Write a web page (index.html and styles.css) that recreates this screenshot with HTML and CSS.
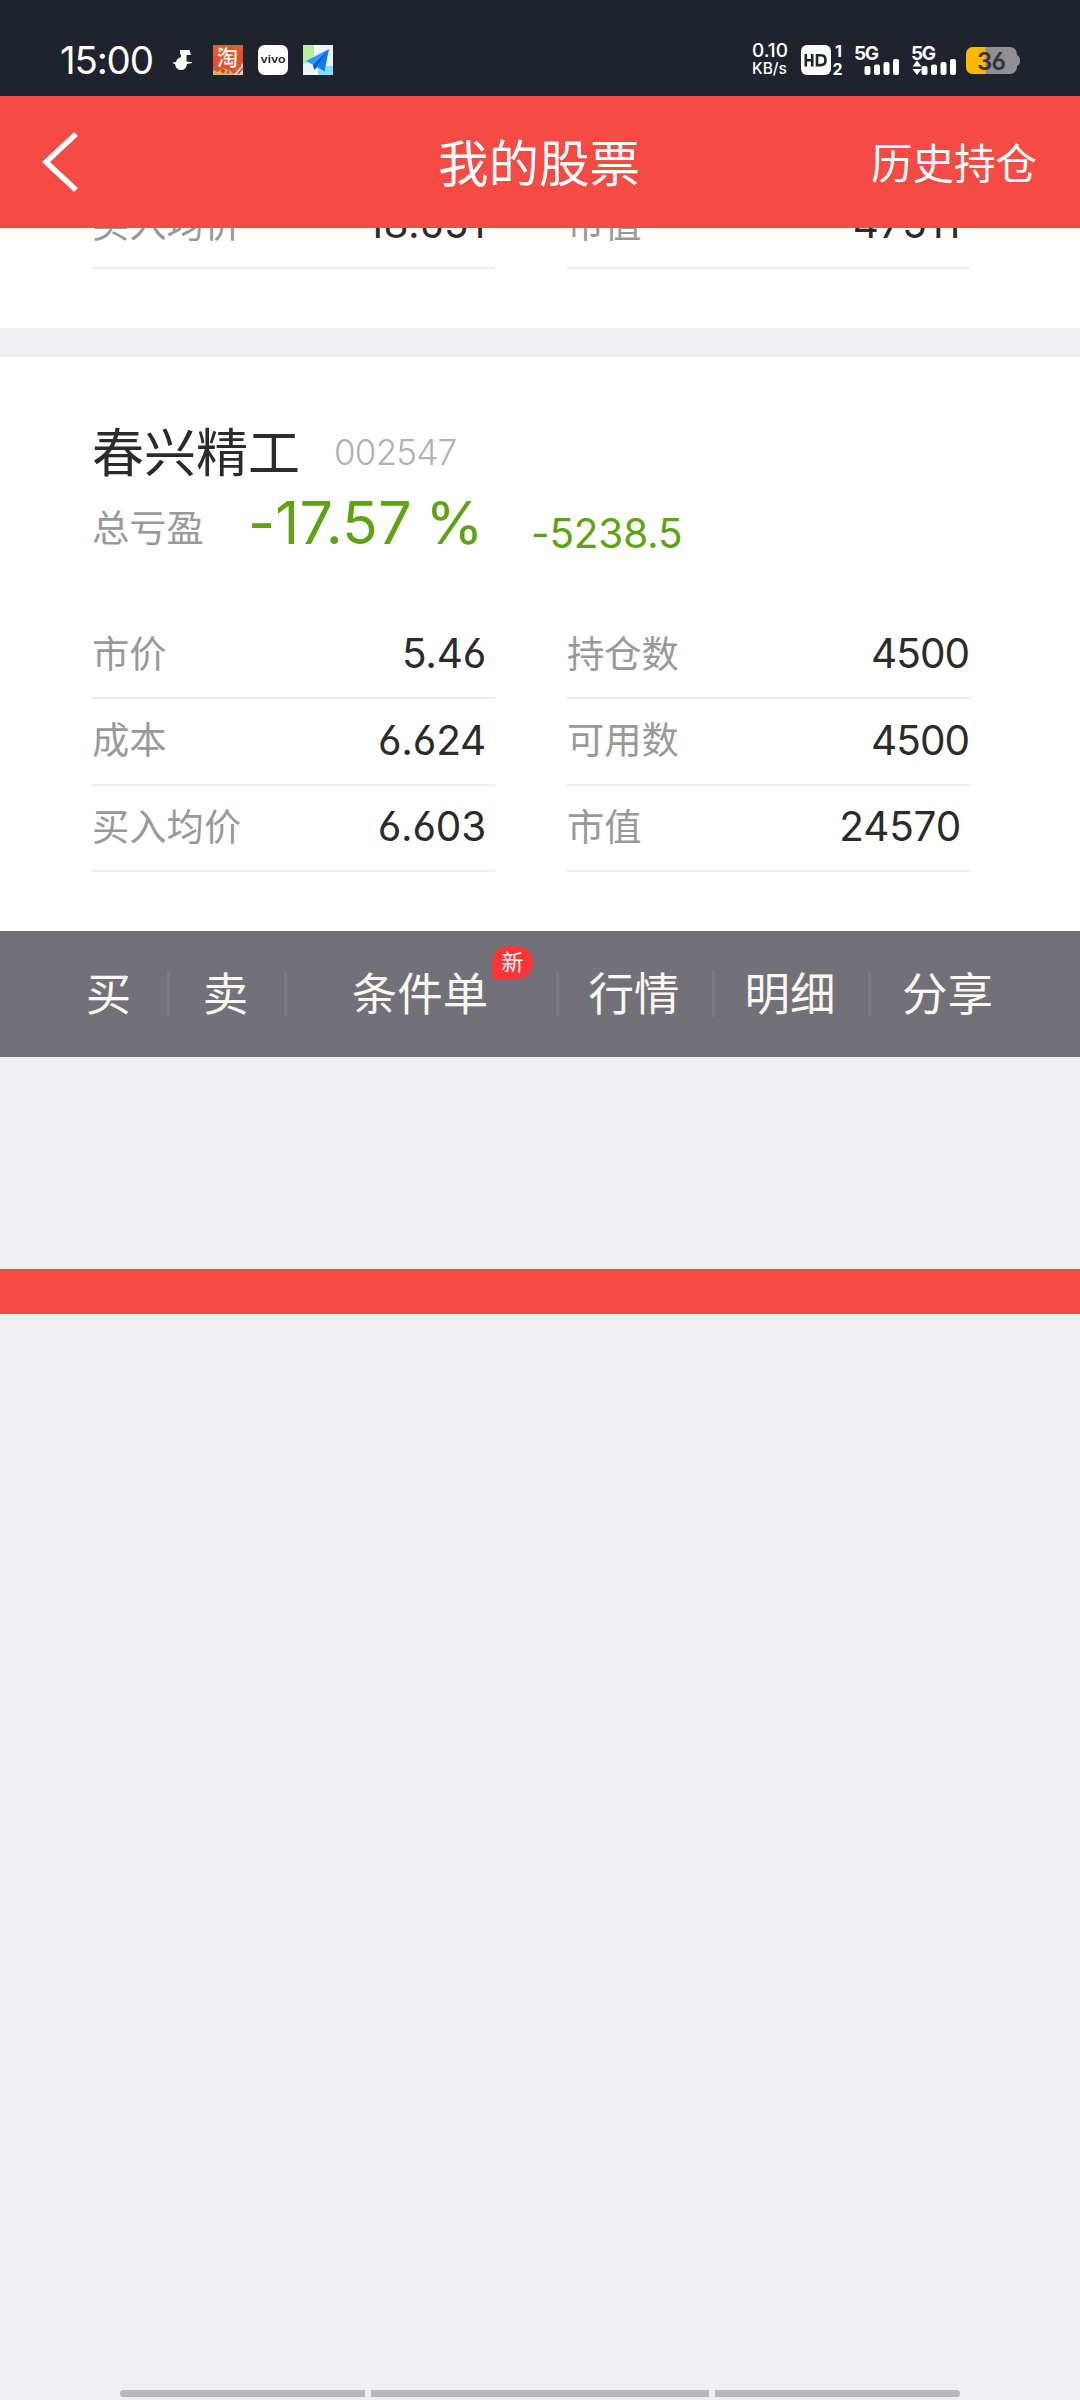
FILE: index.html
```html
<!DOCTYPE html>
<html lang="zh">
<head>
  <meta charset="UTF-8">
  <meta name="viewport" content="width=device-width, initial-scale=1.0">
  <title>我的股票</title>
  <link rel="stylesheet" href="styles.css">
</head>
<body>
  <div class="status-bar">
    <span class="time">15:00</span>
    <svg class="icon-note" width="20" height="22" viewBox="0 0 20 22"><path fill="#fff" d="M7 1h9.500l1.500 5h-4.500v6.500l5.500 0.700v0.800l-5 1q-1 6-6 6t-6-6l-2-0.500v-1l3-0.500q1-4 5-5V5.500H7z"/></svg>
    <svg class="icon-app" width="30" height="30" viewBox="0 0 30 30">
      <rect width="30" height="30" rx="1.500" fill="#e2512f"/>
      <path d="M0 0h30v6L18 2 6 6 0 12z" fill="#d9622f"/>
      <circle cx="6.500" cy="6" r="1.500" fill="#ffc43a"/>
      <path d="M20 30l3-6 7-6v12z" fill="#eed3b8"/>
      <path d="M0 25l5 2 5-4 8 3 3 4H0z" fill="#d8b45a"/>
      <path d="M21 28l7-8M25 29l5-6" stroke="#d8472f" stroke-width="1.500"/>
      <circle cx="10" cy="26" r="2" fill="#e3322c"/>
      <circle cx="15" cy="27" r="1.500" fill="#5d8a3c"/>
      <text x="4" y="20" class="tao">淘</text>
    </svg>
    <svg class="icon-app" width="30" height="30" viewBox="0 0 30 30">
      <rect width="30" height="30" rx="6.500" fill="#fff"/>
      <text x="15" y="18" text-anchor="middle" textLength="25" lengthAdjust="spacingAndGlyphs" class="vivo">vivo</text>
    </svg>
    <svg class="icon-app" width="30" height="30" viewBox="0 0 30 30">
      <rect width="30" height="30" fill="#eaf3f8"/>
      <path d="M0 0h11v14L0 20z" fill="#b5ee9c"/>
      <path d="M15 21h15v9H15z" fill="#7fe0ff"/>
      <path d="M11 0h4v30h-4z" fill="#fff"/>
      <path d="M26 4L3 16l7 4z" fill="#2f95ff"/>
      <path d="M26 4L10 20l1.500 5 3-3 7 4.500z" fill="#0f7bf5"/>
      <path d="M26 4L10 20l1.500 5 2-4z" fill="#0757c4"/>
    </svg>

    <div class="speed">
      <span class="speed-num">0.10</span>
      <span class="speed-unit">KB/s</span>
    </div>
    <svg class="icon-hd" width="43" height="30" viewBox="0 0 43 30">
      <rect width="30" height="30" rx="6" fill="#fff"/>
      <path d="M4.800 9v12.500M11.200 9v12.500M5 15.200h6M16 9v12.500M15 10.300h5q4.500 0 4.500 4.900t-4.500 4.900H15" fill="none" stroke="#1f232e" stroke-width="2.600"/>
      <text x="34" y="11.500" class="sim">1</text>
      <text x="31.500" y="29.500" class="sim">2</text>
    </svg>
    <svg class="icon-signal" width="46" height="30" viewBox="0 0 46 30">
      <text x="-1" y="14.500" class="net">5G</text>
      <g fill="#fff">
        <rect x="9.500" y="21" width="6" height="9" rx="2"/>
        <rect x="19" y="19.500" width="6" height="10.500" rx="2"/>
        <rect x="28.500" y="17" width="6" height="13" rx="2"/>
        <rect x="38" y="14" width="6" height="16" rx="2"/>
      </g>
    </svg>
    <svg class="icon-signal" width="46" height="30" viewBox="0 0 46 30">
      <text x="-1" y="14.500" class="net">5G</text>
      <g fill="#fff">
        <path d="M5 15.500l4.500 6h-9zM0.500 24h9L5 30z"/>
        <rect x="9.500" y="21" width="6" height="9" rx="2"/>
        <rect x="19" y="19.500" width="6" height="10.500" rx="2"/>
        <rect x="28.500" y="17" width="6" height="13" rx="2"/>
        <rect x="38" y="14" width="6" height="16" rx="2"/>
      </g>
    </svg>
    <svg class="icon-battery" width="54" height="28" viewBox="0 0 54 28">
      <path d="M7 1h37a7 7 0 0 1 7 7v1q3 1 3 5.500T51 20v1a7 7 0 0 1-7 7H7a7 7 0 0 1-7-7V8a7 7 0 0 1 7-7z" fill="#8f8f94"/>
      <path d="M7 1h12.500v27H7a7 7 0 0 1-7-7V8a7 7 0 0 1 7-7z" fill="#fdb900"/>
      <text x="25" y="23.500" text-anchor="middle" class="battery-num">36</text>
    </svg>
  </div>

  <header class="navbar">
    <svg class="back" width="38" height="62" viewBox="0 0 38 62"><path d="M35 3L5 31l30 28" fill="none" stroke="#fff" stroke-width="5.500"/></svg>
    <h1>我的股票</h1>
    <span class="history">历史持仓</span>
  </header>

  <section class="card card-prev">
    <div class="grid">
      <div class="item"><span>买入均价</span><b class="inset">18.651</b></div>
      <div class="item"><span>市值</span><b class="inset">47511</b></div>
    </div>
  </section>

  <section class="card">
    <div class="stock">
      <span class="stock-name">春兴精工</span>
      <span class="stock-code">002547</span>
    </div>
    <div class="profit">
      <span class="profit-label">总亏盈</span>
      <span class="profit-rate">-17.57 %</span>
      <span class="profit-num">-5238.5</span>
    </div>
    <div class="grid">
      <div class="item"><span>市价</span><b class="inset">5.46</b></div>
      <div class="item"><span>持仓数</span><b>4500</b></div>
      <div class="item"><span>成本</span><b class="inset">6.624</b></div>
      <div class="item"><span>可用数</span><b>4500</b></div>
      <div class="item"><span>买入均价</span><b class="inset">6.603</b></div>
      <div class="item"><span>市值</span><b class="inset">24570</b></div>
    </div>
  </section>

  <nav class="actions">
    <a>买</a>
    <a>卖</a>
    <a class="wide">条件单<i class="badge">新</i></a>
    <a>行情</a>
    <a>明细</a>
    <a>分享</a>
  </nav>

  <div class="red-strip"></div>

  <div class="gesture">
    <i></i><i></i><i></i>
  </div>
</body>
</html>
```

FILE: styles.css
```css
* {
  box-sizing: border-box;
}
body {
  margin: 0;
  width: 1080px;
  height: 2400px;
  display: flex;
  flex-direction: column;
  overflow: hidden;
  background: #efeef3;
  color: #2b2b2b;
  font-family: Inter, "Noto Sans CJK SC", sans-serif;
  font-feature-settings: "cv03", "cv04";
}

/* 状态栏 */
.status-bar {
  height: 96px;
  padding: 45px 60px 21px;
  display: flex;
  align-items: center;
  background: #1f232e;
  color: #fff;
}
.status-bar svg {
  display: block;
  flex: none;
  overflow: visible;
}
.time {
  width: 113px;
  font-size: 38.5px;
  line-height: 30px;
  letter-spacing: -1.2px;
}
.icon-note {
  margin-right: 20px;
}
.icon-app {
  margin-right: 15px;
}
.tao {
  font-size: 21px;
  font-weight: 500;
  fill: #fff;
}
.vivo {
  font-size: 10px;
  font-weight: 600;
  fill: #222;
}
.speed {
  width: 49px;
  margin-left: auto;
  display: flex;
  flex-direction: column;
  white-space: nowrap;
}
.speed-num {
  font-size: 19px;
  line-height: 16px;
  font-weight: 500;
}
.speed-unit {
  font-size: 15.5px;
  line-height: 19px;
  font-weight: 500;
}
.icon-hd {
  margin-right: 11px;
}
.sim {
  font-size: 16px;
  font-weight: 700;
  fill: #fff;
}
.icon-signal {
  margin-right: 11px;
}
.net {
  font-size: 19px;
  font-weight: 700;
  letter-spacing: -1.5px;
  fill: #fff;
}
.icon-signal + .icon-battery {
  margin-left: -3px;
}
.battery-num {
  font-size: 24px;
  font-weight: 600;
  letter-spacing: -1px;
  fill: #333;
}

/* 标题栏 */
.navbar {
  height: 132px;
  padding: 0 43px 0 41px;
  display: grid;
  grid-template-columns: 1fr auto 1fr;
  align-items: center;
  background: #f64a45;
  color: #fff;
}
.navbar h1 {
  margin: 0;
  padding-top: 3px;
  font-size: 50.5px;
  line-height: 60px;
  font-weight: 400;
}
.history {
  justify-self: end;
  padding-top: 4px;
  font-size: 41.5px;
  line-height: 50px;
}

/* 持仓卡片 */
.card {
  height: 574px;
  padding: 0 110px 59px 92px;
  display: flex;
  flex-direction: column;
  background: #fff;
}
.card-prev {
  height: 100px;
  margin-bottom: 29px;
  overflow: hidden;
  justify-content: flex-end;
}
.stock {
  height: 66px;
  margin-top: 62px;
  display: flex;
  align-items: center;
}
.stock-name {
  width: 242px;
  padding-bottom: 5px;
  font-size: 52px;
}
.stock-code {
  font-size: 35px;
  font-weight: 300;
  letter-spacing: -0.8px;
  color: #b2b2b2;
}
.profit {
  height: 80px;
  display: flex;
  align-items: baseline;
  line-height: 76px;
  color: #5fa314;
  white-space: nowrap;
}
.profit-label {
  width: 156px;
  font-size: 37.3px;
  color: #999;
  position: relative;
  top: -2px;
}
.profit-rate {
  width: 283px;
  font-size: 59px;
  letter-spacing: 0.2px;
  word-spacing: -3px;
}
.profit-num {
  font-size: 40.5px;
  letter-spacing: -0.2px;
  position: relative;
  top: 4px;
}
.grid {
  display: grid;
  grid-template-columns: 403px 403px;
  column-gap: 72px;
  margin-top: auto;
}
.item {
  height: 86.5px;
  padding: 0 1px 4px 0;
  display: flex;
  align-items: center;
  justify-content: space-between;
  border-bottom: 2px solid #eee;
}
.item span {
  padding-bottom: 2px;
  font-size: 37.3px;
  color: #999;
}
.item b {
  padding-top: 2px;
  font-size: 40.5px;
  font-weight: 400;
  letter-spacing: -1px;
}
.item .inset {
  margin-right: 8px;
  letter-spacing: -0.2px;
}
.card-prev .item .inset {
  letter-spacing: 0.4px;
}
.card-prev .grid {
  flex: none;
}

/* 操作栏 */
.actions {
  height: 126px;
  padding: 0 53px;
  display: flex;
  align-items: center;
  background: #727079;
  color: #fdf7f1;
}
.actions a {
  width: 156px;
  height: 46px;
  padding-right: 3px;
  border-right: 3px solid #7c7b7d;
  font-size: 45.5px;
  line-height: 47px;
  text-align: center;
}
.actions a:nth-child(-n+2) {
  width: 117px;
}
.actions .wide {
  width: 272px;
  position: relative;
}
.actions a:last-child {
  padding-right: 0;
  border-right-color: transparent;
}
.badge {
  position: absolute;
  left: 205px;
  top: -25px;
  width: 41px;
  height: 33px;
  border-radius: 17px 17px 17px 2px;
  background: #fe3437;
  color: #fff;
  font-size: 22px;
  line-height: 33px;
  font-style: normal;
}

.red-strip {
  height: 45px;
  margin-top: 212px;
  background: #f64a45;
}

/* 底部手势条 */
.gesture {
  margin: auto 120px 3px;
  display: grid;
  grid-template-columns: 245px 338px 245px;
  gap: 6px;
}
.gesture i {
  height: 7px;
  background: #b7b6b9;
}
.gesture i:first-child {
  border-radius: 4px 0 0 4px;
}
.gesture i:last-child {
  border-radius: 0 4px 4px 0;
}
```
